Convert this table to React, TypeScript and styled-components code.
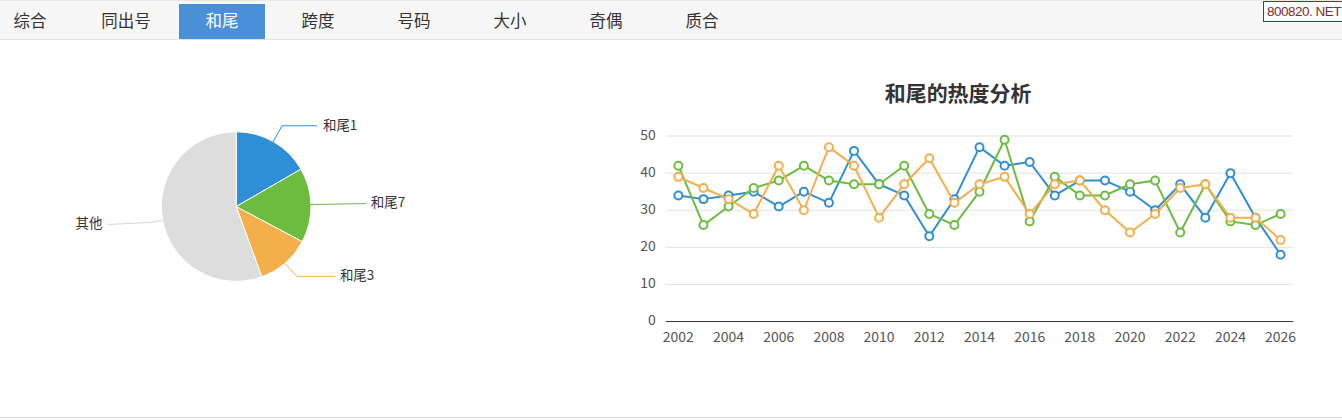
import React from "react";
import styled, { createGlobalStyle } from "styled-components";

const GlobalStyle = createGlobalStyle`
  html, body { margin: 0; padding: 0; background: #fff; }
  body { font-family: "Noto Sans CJK SC", "Noto Sans", sans-serif; color: #333; }
  * { box-sizing: border-box; }
`;

const Page = styled.div`
  position: relative;
  width: 1342px;
  height: 420px;
  overflow: hidden;
  background: #fff;
`;

const TabBar = styled.div`
  height: 40px;
  background: #f7f7f7;
  border-top: 1px solid #e8e8e8;
  border-bottom: 1px solid #e2e2e2;
  padding-top: 3px;
`;

const TabList = styled.ul`
  display: flex;
  list-style: none;
  margin: 0 0 0 -13px;
  padding: 0;
`;

const Tab = styled.li<{ $active?: boolean }>`
  width: 86px;
  height: 35px;
  margin-right: 10px;
  line-height: 33px;
  text-align: center;
  font-size: 16.5px;
  color: ${(p) => (p.$active ? "#fff" : "#333")};
  background: ${(p) => (p.$active ? "#4a90d9" : "transparent")};
`;

const Logo = styled.div`
  position: absolute;
  top: 1px;
  left: 1263px;
  height: 21px;
  padding: 0 8px 0 3px;
  border: 1px solid #7d2b2b;
  background: #fff;
  color: #7d2b2b;
  font-family: "Liberation Sans", Arial, sans-serif;
  font-size: 13.5px;
  letter-spacing: -0.5px;
  line-height: 19px;
  white-space: nowrap;
`;

const Content = styled.div`
  display: flex;
  height: 378px;
  border-bottom: 1px solid #dcdcdc;
`;

const PiePanel = styled.div`
  width: 610px;
  height: 100%;
`;

const LinePanel = styled.div`
  flex: 1;
  height: 100%;
`;

const ChartSvg = styled.svg`
  display: block;
  width: 100%;
  height: 100%;
  font-family: "Noto Sans CJK SC", "Noto Sans", sans-serif;
`;

const tabs = ["综合", "同出号", "和尾", "跨度", "号码", "大小", "奇偶", "质合"];

const BLUE = "#2f8fd6";
const GREEN = "#6cbd3f";
const ORANGE = "#f4ae4a";
const GRAY = "#dddddd";

const cx = 236;
const cy = 167;
const R = 75;

function pt(a: number, r = R) {
  const rad = (a * Math.PI) / 180;
  return [cx + r * Math.sin(rad), cy - r * Math.cos(rad)];
}

function slice(a0: number, a1: number) {
  const [x0, y0] = pt(a0);
  const [x1, y1] = pt(a1);
  const large = a1 - a0 > 180 ? 1 : 0;
  return `M${cx},${cy} L${x0},${y0} A${R},${R} 0 ${large} 1 ${x1},${y1} Z`;
}

const slices = [
  { a0: 0, a1: 60, color: BLUE },
  { a0: 60, a1: 118, color: GREEN },
  { a0: 118, a1: 160, color: ORANGE },
  { a0: 160, a1: 360, color: GRAY },
];

const pieLabels = [
  { pts: "273,102 282,86 317,86", color: BLUE, text: "和尾1", x: 323, y: 87, anchor: "start" },
  { pts: "310,165 366,164", color: GREEN, text: "和尾7", x: 371, y: 164, anchor: "start" },
  { pts: "285,224 297,237 335,237", color: ORANGE, text: "和尾3", x: 340, y: 237, anchor: "start" },
  { pts: "162,181 148,183 108,185", color: "#d6d6d6", text: "其他", x: 102, y: 185, anchor: "end" },
];

function PieChart() {
  return (
    <ChartSvg viewBox="0 0 610 378">
      {slices.map((s, i) => (
        <path key={i} d={slice(s.a0, s.a1)} fill={s.color} stroke="#fff" strokeWidth={1} />
      ))}
      {pieLabels.map((l, i) => (
        <g key={i}>
          <polyline points={l.pts} fill="none" stroke={l.color} strokeWidth={1} />
          <text
            x={l.x}
            y={l.y}
            fontSize={13.5}
            fill="#333"
            textAnchor={l.anchor as "start" | "end"}
            dominantBaseline="middle"
          >
            {l.text}
          </text>
        </g>
      ))}
    </ChartSvg>
  );
}

const years = Array.from({ length: 25 }, (_, i) => 2002 + i);
const blue = [34, 33, 34, 35, 31, 35, 32, 46, 37, 34, 23, 33, 47, 42, 43, 34, 38, 38, 35, 30, 37, 28, 40, 28, 18];
const green = [42, 26, 31, 36, 38, 42, 38, 37, 37, 42, 29, 26, 35, 49, 27, 39, 34, 34, 37, 38, 24, 37, 27, 26, 29];
const orange = [39, 36, 33, 29, 42, 30, 47, 42, 28, 37, 44, 32, 37, 39, 29, 37, 38, 30, 24, 29, 36, 37, 28, 28, 22];

const gx0 = 55;
const gx1 = 684;
const step = (gx1 - gx0) / 25;
const xAt = (i: number) => gx0 + step * (i + 0.5);
const yAt = (v: number) => 282.3 - 3.72 * v;

function Series({ data, color }: { data: number[]; color: string }) {
  const pts = data.map((v, i) => `${xAt(i)},${yAt(v)}`).join(" ");
  return (
    <g>
      <polyline points={pts} fill="none" stroke={color} strokeWidth={2} strokeLinejoin="round" />
      {data.map((v, i) => (
        <circle key={i} cx={xAt(i)} cy={yAt(v)} r={4} fill="#fff" stroke={color} strokeWidth={2} />
      ))}
    </g>
  );
}

function LineChart() {
  const ticks = [0, 10, 20, 30, 40, 50];
  return (
    <ChartSvg viewBox="0 0 732 378">
      <text x={348} y={55} fontSize={21} fontWeight="bold" fill="#333" textAnchor="middle" dominantBaseline="middle">
        和尾的热度分析
      </text>
      {ticks.map((t) => (
        <g key={t}>
          {t > 0 && <line x1={gx0} x2={gx1} y1={yAt(t)} y2={yAt(t)} stroke="#e3e3e3" strokeWidth={1} />}
          <text x={45} y={yAt(t)} fontSize={14} fill="#555" textAnchor="end" dominantBaseline="middle">
            {t}
          </text>
        </g>
      ))}
      <line x1={gx0} x2={gx1} y1={yAt(0)} y2={yAt(0)} stroke="#333" strokeWidth={1} />
      {years.map((y, i) =>
        i % 2 === 0 ? (
          <text key={y} x={xAt(i)} y={299} fontSize={14} fill="#555" textAnchor="middle" dominantBaseline="middle">
            {y}
          </text>
        ) : null
      )}
      <Series data={blue} color={BLUE} />
      <Series data={green} color={GREEN} />
      <Series data={orange} color={ORANGE} />
    </ChartSvg>
  );
}

export default function App() {
  return (
    <Page>
      <GlobalStyle />
      <TabBar>
        <TabList>
          {tabs.map((t) => (
            <Tab key={t} $active={t === "和尾"}>
              {t}
            </Tab>
          ))}
        </TabList>
      </TabBar>
      <Logo>800820. NET</Logo>
      <Content>
        <PiePanel>
          <PieChart />
        </PiePanel>
        <LinePanel>
          <LineChart />
        </LinePanel>
      </Content>
    </Page>
  );
}
